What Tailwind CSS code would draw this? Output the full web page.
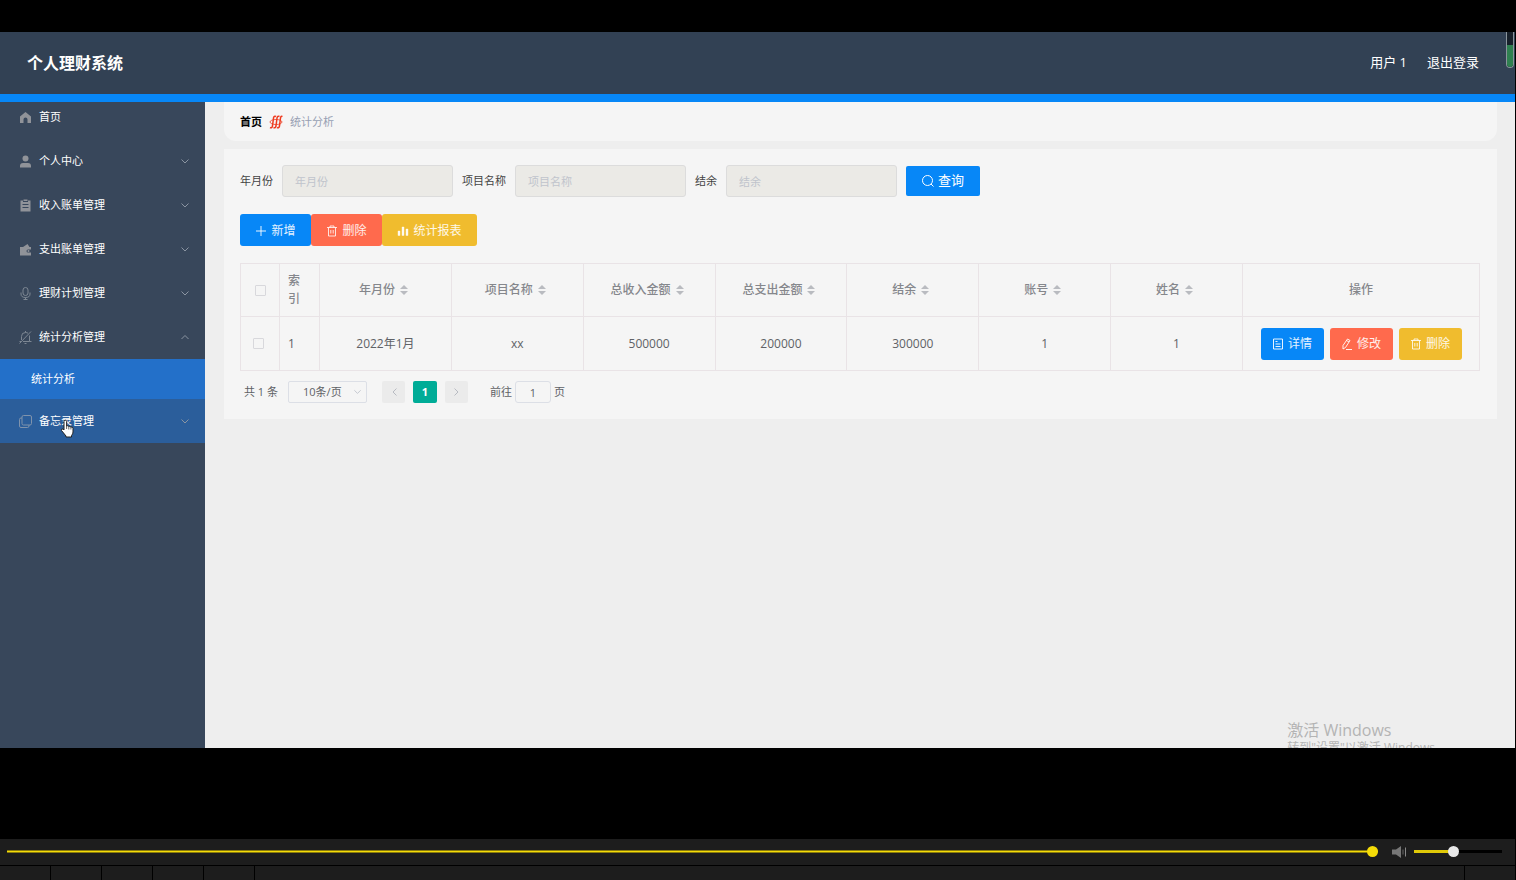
<!DOCTYPE html>
<html lang="zh-CN">
<head>
    <meta charset="UTF-8">
    <meta name="viewport" content="width=device-width, initial-scale=1.0">
    <title>个人理财系统</title>
    <script src="https://cdn.jsdelivr.net/npm/@tailwindcss/browser@4"></script>
    <style>
        body { font-family: 'Open Sans', 'Noto Sans CJK SC', sans-serif; }
    </style>
</head>
<body class="flex min-h-screen flex-col bg-black pt-8">
    <!-- Shared icons -->
    <svg class="hidden">
        <symbol id="arrow-down" viewBox="0 0 10 10"><path d="M1.500 2.500 5 6l3.500-3.500" fill="none" stroke="currentColor"/></symbol>
        <symbol id="sort" viewBox="0 0 8 12"><path d="M0 5 4 1l4 4zM0 7h8l-4 4z" fill="currentColor"/></symbol>
        <symbol id="trash" viewBox="0 0 12 12"><path d="M1 2.500h10M4 2.500v-1.500h4v1.500M2.500 2.500v8.500h7V2.500M4.800 5v3.500M7.200 5v3.500" fill="none" stroke="currentColor" stroke-width=".9"/></symbol>
    </svg>

    <div class="relative mr-px flex flex-1 flex-col overflow-hidden">
        <header class="flex h-[70px] items-center justify-between border-b-8 border-[#0787f7] bg-[#324154] pr-9 pl-[27px] text-white">
            <h1 class="text-[16px] font-bold">个人理财系统</h1>
            <nav class="flex gap-5 text-[13px]">
                <a href="#">用户 1</a>
                <a href="#">退出登录</a>
            </nav>
            <div class="absolute top-0 right-px flex h-9 w-2 flex-col justify-end overflow-hidden rounded-b-full border border-t-0 border-[#8b959c] bg-[#17202a]">
                <div class="h-[22px] bg-[#2f8050]"></div>
            </div>
        </header>

        <div class="flex flex-1">
            <aside class="relative w-[205px] shrink-0 bg-[#38475b] text-[11px] text-white">
                <a href="#" class="flex h-[37px] items-center gap-[7px] px-[19px] pb-[6px]">
                    <svg class="size-[13px] text-[#909399]" viewBox="0 0 13 13"><path d="M6.500 1 12 5.500V12H8.500V8.500a2 2 0 0 0-4 0V12H1V5.500z" fill="currentColor"/></svg>
                    首页
                </a>
                <a href="#" class="flex h-11 items-center gap-[7px] pt-px pr-[15px] pl-[19px]">
                    <svg class="size-[13px] text-[#909399]" viewBox="0 0 13 13"><circle cx="6.500" cy="3.500" r="3" fill="currentColor"/><path d="M1 12.500V11q0-3 3-3h5q3 0 3 3v1.500z" fill="currentColor"/></svg>
                    <span class="flex-1">个人中心</span>
                    <svg class="size-[10px] text-[#8b95a2]"><use href="#arrow-down"/></svg>
                </a>
                <a href="#" class="flex h-11 items-center gap-[7px] pt-px pr-[15px] pl-[19px]">
                    <svg class="size-[13px] text-[#909399]" viewBox="0 0 13 13"><path d="M1.500 1.500H4V3h5V1.500h2.500v11h-10z" fill="currentColor"/><path d="M4.500.5h4V2h-4z" fill="currentColor"/><path d="M3.500 5.500h6M3.500 8.500h6" stroke="#38475b"/></svg>
                    <span class="flex-1">收入账单管理</span>
                    <svg class="size-[10px] text-[#8b95a2]"><use href="#arrow-down"/></svg>
                </a>
                <a href="#" class="flex h-11 items-center gap-[7px] pt-px pr-[15px] pl-[19px]">
                    <svg class="size-[13px] text-[#909399]" viewBox="0 0 13 13"><path d="M1 4h3l4.500-3 2 3H12v2.500H9a1.500 1.500 0 0 0 0 3h3v3H1z" fill="currentColor"/><circle cx="9.500" cy="8" r="1" fill="currentColor"/></svg>
                    <span class="flex-1">支出账单管理</span>
                    <svg class="size-[10px] text-[#8b95a2]"><use href="#arrow-down"/></svg>
                </a>
                <a href="#" class="flex h-11 items-center gap-[7px] pt-px pr-[15px] pl-[19px]">
                    <svg class="size-[13px] text-[#7d8793]" viewBox="0 0 13 13" fill="none" stroke="currentColor"><rect x="4" y=".5" width="5" height="8" rx="2.500"/><path d="M2 5.500V7q0 3.500 4.500 3.500T11 7V5.500M6.500 10.500v2M4.500 12.500h4"/></svg>
                    <span class="flex-1">理财计划管理</span>
                    <svg class="size-[10px] text-[#8b95a2]"><use href="#arrow-down"/></svg>
                </a>
                <a href="#" class="flex h-11 items-center gap-[7px] pt-px pr-[15px] pl-[19px]">
                    <svg class="size-[13px] text-[#7d8793]" viewBox="0 0 13 13" fill="none" stroke="currentColor"><path d="M.5 12.500 12 .5M2.500 9V5.500q0-4 4-4 1.500 0 2.500.7M10.500 4.500v6H12.500M4 10.500h6.500M.5 10.500H2M6.500 0v1.500M5.500 12.500h2"/></svg>
                    <span class="flex-1">统计分析管理</span>
                    <svg class="size-[10px] text-[#8b95a2]" viewBox="0 0 10 10"><path d="M1.500 6 5 2.500 8.500 6" fill="none" stroke="currentColor"/></svg>
                </a>
                <a href="#" class="flex h-10 items-center bg-[#2370c9] pl-[31px]">统计分析</a>
                <a href="#" class="flex h-11 items-center gap-[7px] bg-[#2b5e9b] pt-px pr-[15px] pl-[19px]">
                    <svg class="size-[13px] text-[#7f93ac]" viewBox="0 0 13 13" fill="none" stroke="currentColor"><rect x="3" y=".5" width="9.500" height="9.500" rx="1.500"/><path d="M3 3H2Q.5 3 .5 4.500V11q0 1.500 1.500 1.500h6.500q1.500 0 1.500-1.500v-1"/></svg>
                    <span class="flex-1">备忘录管理</span>
                    <svg class="size-[10px] text-[#8b95a2]"><use href="#arrow-down"/></svg>
                </a>
                <!-- Mouse pointer -->
                <svg class="absolute top-[317px] left-[60px] h-[19px] w-[15px]" viewBox="0 0 15 19"><path d="M4 11V2.500a1.300 1.300 0 0 1 2.600 0V7q1.200-.8 2.200.4 1.200-.6 2.100.6 2.100-.5 2.100 1.500v3.500q0 2-1.500 3.500v1.500H6V17L1.500 11.500Q1 9.500 3 10z" fill="#fff" stroke="#222"/><path d="M6.600 7v3M8.800 7.500v3M10.900 8v2.500" stroke="#222" stroke-width=".7"/></svg>
            </aside>

            <main class="relative min-w-0 flex-1 overflow-hidden bg-[#eeeeee] pr-[18px] pl-[19px]">
                <nav class="mb-2 flex h-[39px] items-center gap-[7px] rounded-b-xl bg-[#f5f5f5] px-4 pt-px text-[11px]">
                    <a href="#" class="font-bold text-black">首页</a>
                    <svg class="h-[14px] w-[14px]" viewBox="0 0 14 14" fill="none" stroke="#ee3b20" stroke-width="1.500"><path d="M1 12.500q2 1 2.500-1.500L4.500 3Q5 .5 7 1.500M4.500 12.500q2 1 2.500-1.500L8 3q.5-2.500 2.500-1.500M8 12.500q2 1 2.500-1.500L11.500 3q.5-2.500 2-1.500"/><ellipse cx="7" cy="7" rx="6" ry="2.500" stroke-width=".8"/></svg>
                    <span class="text-[#97a0b3]">统计分析</span>
                </nav>

                <section class="bg-[#f5f5f5] pt-4 pr-[17px] pb-[15px] pl-4">
                    <form class="mb-[17px] flex items-center gap-[9px] text-[11px] text-[#444]">
                        <label for="month">年月份</label>
                        <input id="month" type="text" placeholder="年月份" class="h-8 w-[171px] rounded-[3px] border border-[#dcdcdc] bg-[#ebeae6] px-3 placeholder:text-[#c0c4cc]">
                        <label for="project">项目名称</label>
                        <input id="project" type="text" placeholder="项目名称" class="h-8 w-[171px] rounded-[3px] border border-[#dcdcdc] bg-[#ebeae6] px-3 placeholder:text-[#c0c4cc]">
                        <label for="balance">结余</label>
                        <input id="balance" type="text" placeholder="结余" class="h-8 w-[171px] rounded-[3px] border border-[#dcdcdc] bg-[#ebeae6] px-3 placeholder:text-[#c0c4cc]">
                        <button type="button" class="flex h-[30px] w-[74px] items-center justify-center gap-1 rounded-[2px] bg-[#0787f7] text-[13px] text-white">
                            <svg class="size-3" viewBox="0 0 12 12" fill="none" stroke="currentColor"><circle cx="5.500" cy="5.500" r="5"/><path d="m9 9 2.500 2.500"/></svg>
                            查询
                        </button>
                    </form>

                    <div class="mb-[17px] flex text-[12px] text-white/90">
                        <button type="button" class="flex h-8 w-[71px] items-center justify-center gap-1 rounded-[3px] bg-[#0787f7] pt-px">
                            <svg class="size-3" viewBox="0 0 12 12"><path d="M6 1v10M1 6h10" stroke="currentColor"/></svg>
                            新增
                        </button>
                        <button type="button" class="flex h-8 w-[71px] items-center justify-center gap-1 rounded-[3px] bg-[#ff6a4d] pt-px">
                            <svg class="size-3"><use href="#trash"/></svg>
                            删除
                        </button>
                        <button type="button" class="flex h-8 w-[95px] items-center justify-center gap-1 rounded-[3px] bg-[#f0bc2e] pt-px">
                            <svg class="size-3" viewBox="0 0 12 12"><path d="M1 6h2v4.500H1zM5 2h2v8.500H5zM9 4h2v6.500H9z" fill="currentColor" stroke="currentColor" stroke-width=".4"/></svg>
                            统计报表
                        </button>
                    </div>

                    <table class="w-full table-fixed border-collapse text-center text-[12px] leading-[18px] text-[#606266] [&_td]:border [&_td]:border-[#e9e3e6] [&_th]:border [&_th]:border-[#e9e3e6] [&_th]:font-medium">
                        <colgroup>
                            <col class="w-[39px]"><col class="w-10"><col><col><col><col><col><col><col><col class="w-[237px]">
                        </colgroup>
                        <thead>
                            <tr class="h-[53px] text-[#85878c]">
                                <th><input type="checkbox" aria-label="全选" class="block mx-auto size-[11px] appearance-none rounded-[1px] border border-[#d8d8dc]"></th>
                                <th class="px-2 text-left">索引</th>
                                <th><span class="flex items-center justify-center gap-[5px] pr-1">年月份<svg class="h-3 w-2 text-[#b9bbc0]"><use href="#sort"/></svg></span></th>
                                <th><span class="flex items-center justify-center gap-[5px] pr-1">项目名称<svg class="h-3 w-2 text-[#b9bbc0]"><use href="#sort"/></svg></span></th>
                                <th><span class="flex items-center justify-center gap-[5px] pr-1">总收入金额<svg class="h-3 w-2 text-[#b9bbc0]"><use href="#sort"/></svg></span></th>
                                <th><span class="flex items-center justify-center gap-[5px] pr-1">总支出金额<svg class="h-3 w-2 text-[#b9bbc0]"><use href="#sort"/></svg></span></th>
                                <th><span class="flex items-center justify-center gap-[5px] pr-1">结余<svg class="h-3 w-2 text-[#b9bbc0]"><use href="#sort"/></svg></span></th>
                                <th><span class="flex items-center justify-center gap-[5px] pr-1">账号<svg class="h-3 w-2 text-[#b9bbc0]"><use href="#sort"/></svg></span></th>
                                <th><span class="flex items-center justify-center gap-[5px] pr-1">姓名<svg class="h-3 w-2 text-[#b9bbc0]"><use href="#sort"/></svg></span></th>
                                <th>操作</th>
                            </tr>
                        </thead>
                        <tbody>
                            <tr class="h-[54px]">
                                <td class="pr-[3px]"><input type="checkbox" aria-label="选择第 1 行" class="block mx-auto size-[11px] appearance-none rounded-[1px] border border-[#d8d8dc]"></td>
                                <td class="px-2 text-left">1</td>
                                <td>2022年1月</td>
                                <td>xx</td>
                                <td>500000</td>
                                <td>200000</td>
                                <td>300000</td>
                                <td>1</td>
                                <td>1</td>
                                <td>
                                    <div class="flex justify-center gap-[6px] text-white/90">
                                        <button type="button" class="flex h-8 w-[63px] items-center justify-center gap-1 rounded-[3px] bg-[#0787f7]">
                                            <svg class="size-3" viewBox="0 0 12 12" fill="none" stroke="currentColor"><path d="M1.500 1h9v10h-9zM3.500 3.500h2M3.500 6h5M3.500 8.500h5"/></svg>
                                            详情
                                        </button>
                                        <button type="button" class="flex h-8 w-[63px] items-center justify-center gap-1 rounded-[3px] bg-[#ff6a4d]">
                                            <svg class="size-3" viewBox="0 0 12 12" fill="none" stroke="currentColor"><path d="m6.500 1 2.500 1.500-4.500 7L2 11V7.500zM5.500 2.500 8 4M5 11.500h6"/></svg>
                                            修改
                                        </button>
                                        <button type="button" class="flex h-8 w-[63px] items-center justify-center gap-1 rounded-[3px] bg-[#f0bc2e]">
                                            <svg class="size-3"><use href="#trash"/></svg>
                                            删除
                                        </button>
                                    </div>
                                </td>
                            </tr>
                        </tbody>
                    </table>

                    <div class="mt-[9px] flex h-6 items-center pl-1 text-[11px] text-[#606266]">
                        <span class="mr-[10px]">共 1 条</span>
                        <div class="relative mr-[15px]">
                            <select aria-label="每页条数" class="block h-[22px] w-[79px] appearance-none rounded-[2px] border border-[#dcdfe6] pl-[14px]">
                                <option>10条/页</option>
                            </select>
                            <svg class="pointer-events-none absolute top-[7px] right-[5px] size-[9px] text-[#c0c4cc]"><use href="#arrow-down"/></svg>
                        </div>
                        <div class="mr-[22px] flex gap-2">
                            <button type="button" aria-label="上一页" class="flex h-[22px] w-[23px] items-center justify-center rounded-[2px] bg-[#ebebeb] text-[#b8bbc2]">
                                <svg class="size-[10px] rotate-90"><use href="#arrow-down"/></svg>
                            </button>
                            <button type="button" class="h-[22px] w-6 rounded-[2px] bg-[#00ac97] font-bold text-white">1</button>
                            <button type="button" aria-label="下一页" class="flex h-[22px] w-[23px] items-center justify-center rounded-[2px] bg-[#ebebeb] text-[#b8bbc2]">
                                <svg class="size-[10px] -rotate-90"><use href="#arrow-down"/></svg>
                            </button>
                        </div>
                        <label for="page">前往</label>
                        <input id="page" type="text" value="1" class="mx-[3px] h-[22px] w-9 rounded-[3px] border border-[#dcdfe6] text-center">
                        <span>页</span>
                    </div>
                </section>

                <!-- Activation watermark, second line runs off the bottom edge -->
                <div class="absolute right-20 -bottom-2 text-[#b4b4b4]">
                    <p class="text-[16px] leading-5">激活 Windows</p>
                    <p class="text-[12px] leading-4">转到"设置"以激活 Windows</p>
                </div>
            </main>
        </div>
    </div>

    <!-- Video player controls -->
    <footer class="mt-[91px] mr-px bg-[#1d1d1d]">
        <div class="flex h-[26px] items-center pr-[13px] pb-px pl-[7px]">
            <input type="range" aria-label="播放进度" min="0" max="100" value="100" class="h-[3px] min-w-0 flex-1 appearance-none border-y border-[#8a7c0c] bg-[#f5dc08] [&::-webkit-slider-thumb]:size-[11px] [&::-webkit-slider-thumb]:appearance-none [&::-webkit-slider-thumb]:rounded-full [&::-webkit-slider-thumb]:bg-[#f5dc08]">
            <button type="button" aria-label="静音" class="mr-[7px] ml-[14px]">
                <svg class="h-3 w-[15px]" viewBox="0 0 15 12"><path d="M0 3.500h4L9 0v12L4 8.500H0z" fill="#777"/><path d="M11 3.500v5" stroke="#666"/><path d="M13.500 1.500v9" stroke="#888"/></svg>
            </button>
            <input type="range" aria-label="音量" min="0" max="100" value="44" class="h-[3px] w-[88px] appearance-none bg-linear-to-r from-[#e0c908] from-44% to-black to-44% [&::-webkit-slider-thumb]:size-[11px] [&::-webkit-slider-thumb]:appearance-none [&::-webkit-slider-thumb]:rounded-full [&::-webkit-slider-thumb]:bg-[#e8e8e8]">
        </div>
        <div class="flex h-[15px] border-t border-black">
            <div class="w-[51px] border-r border-black"></div>
            <div class="w-[51px] border-r border-black"></div>
            <div class="w-[51px] border-r border-black"></div>
            <div class="w-[51px] border-r border-black"></div>
            <div class="w-[51px] border-r border-black"></div>
            <div class="flex-1"></div>
            <div class="w-[51px] border-l border-black"></div>
        </div>
    </footer>
</body>
</html>
